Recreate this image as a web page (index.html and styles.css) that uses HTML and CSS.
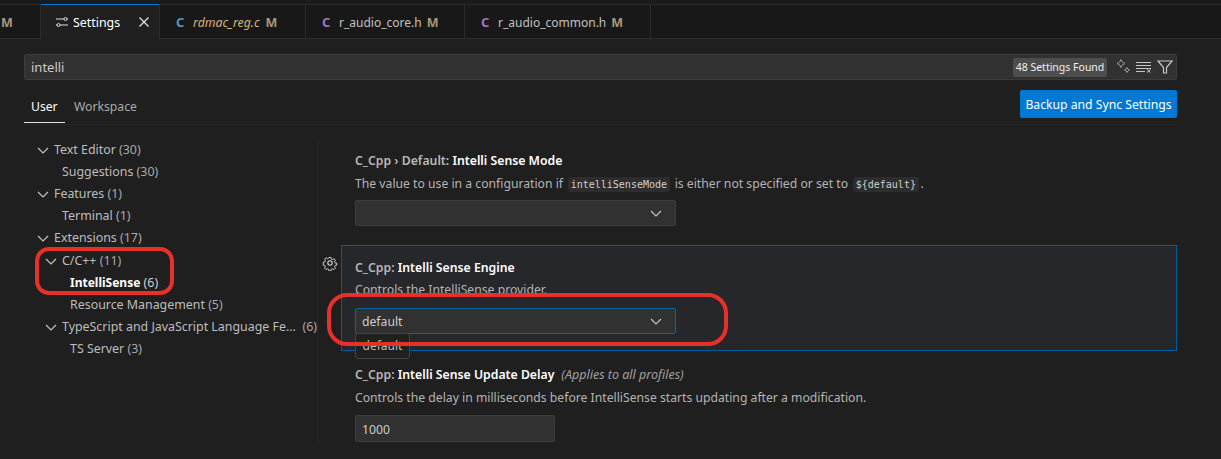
FILE: index.html
```html
<!DOCTYPE html>
<html lang="en">
<head>
<meta charset="utf-8">
<title>Settings</title>
<link rel="stylesheet" href="styles.css">
</head>
<body>
<div class="topstrip"></div>
<div class="tabs">
  <div class="tab tab-prev"><span class="mod">M</span></div>
  <div class="tab active">
    <svg class="tab-icon" width="16" height="16" viewBox="0 0 16 16" fill="none" stroke="#e0e0e0" stroke-width="1"><path d="M2 5h8M13 5h1M2 11h1M6 11h8"/><circle cx="11.5" cy="5" r="1.5"/><circle cx="4.5" cy="11" r="1.5"/></svg>
    <span class="tab-label">Settings</span>
    <svg class="tab-close" width="16" height="16" viewBox="0 0 16 16" fill="none" stroke="#e8e8e8" stroke-width="1.2"><path d="M3.5 3.5l9 9M12.5 3.5l-9 9"/></svg>
  </div>
  <div class="tab t-reg"><span class="lang c-blue">C</span><span class="name italic">rdmac_reg.c</span><span class="mod">M</span></div>
  <div class="tab t-core"><span class="lang c-purple">C</span><span class="name">r_audio_core.h</span><span class="mod">M</span></div>
  <div class="tab t-common"><span class="lang c-purple">C</span><span class="name">r_audio_common.h</span><span class="mod">M</span></div>
</div>

<div class="searchbar">
  <span class="search-text">intelli</span>
  <span class="badge">48 Settings Found</span>
  <svg class="s-icon" width="18" height="18" viewBox="0 0 18 18" fill="none" stroke="#9a9a9a" stroke-width="1"><path d="M7 1.500q.8 3.200 4 4-3.200.8-4 4-.8-3.200-4-4 3.200-.8 4-4z"/><path d="M13 9.500q.5 2 2.500 2.500-2 .5-2.500 2.500-.5-2-2.500-2.500 2-.5 2.500-2.500z"/></svg>
  <svg class="s-icon" width="18" height="18" viewBox="0 0 18 18" fill="none" stroke="#c8c8c8" stroke-width="1"><path d="M1 4.500h15M1 7.500h15M1 10.500h15M1 13.500h9"/><path d="M12 11.500l3.500 3M15.500 11.500l-3.500 3"/></svg>
  <svg class="s-icon" width="18" height="18" viewBox="0 0 18 18" fill="none" stroke="#c8c8c8" stroke-width="1.200"><path d="M2 3h14l-5.500 6.500v5.500h-3v-5.500z"/></svg>
</div>

<div class="scope">
  <div class="scope-tabs">
    <span class="scope-tab on">User</span>
    <span class="scope-tab">Workspace</span>
  </div>
  <span class="sync">Backup and Sync Settings</span>
</div>

<div class="main">
  <nav class="tree">
    <div class="row l1"><svg class="chev" width="14" height="14" viewBox="0 0 14 14"><path d="M2 5l5 5 5-5"/></svg>Text Editor&nbsp;<em>(30)</em></div>
    <div class="row l2">Suggestions&nbsp;<em>(30)</em></div>
    <div class="row l1"><svg class="chev" width="14" height="14" viewBox="0 0 14 14"><path d="M2 5l5 5 5-5"/></svg>Features&nbsp;<em>(1)</em></div>
    <div class="row l2">Terminal&nbsp;<em>(1)</em></div>
    <div class="row l1"><svg class="chev" width="14" height="14" viewBox="0 0 14 14"><path d="M2 5l5 5 5-5"/></svg>Extensions&nbsp;<em>(17)</em></div>
    <div class="row l2b"><svg class="chev" width="14" height="14" viewBox="0 0 14 14"><path d="M2 5l5 5 5-5"/></svg>C/C++&nbsp;<em>(11)</em></div>
    <div class="row l3 sel"><b>IntelliSense</b>&nbsp;<em>(6)</em></div>
    <div class="row l3">Resource Management&nbsp;<em>(5)</em></div>
    <div class="row l2b"><svg class="chev" width="14" height="14" viewBox="0 0 14 14"><path d="M2 5l5 5 5-5"/></svg><span class="trunc">TypeScript and JavaScript Language Fe...</span><em class="count-end">(6)</em></div>
    <div class="row l3">TS Server&nbsp;<em>(3)</em></div>
  </nav>

  <section class="list">
    <article class="item first">
      <h3 class="title">C_Cpp › Default: <b>Intelli Sense Mode</b></h3>
      <p class="desc">The value to use in a configuration if <code>intelliSenseMode</code> is either not specified or set to <code>${default}</code>.</p>
      <div class="select"><svg class="sel-chev" width="14" height="14" viewBox="0 0 14 14"><path d="M2 5l5 5 5-5"/></svg></div>
    </article>

    <article class="item focused">
      <svg class="gear" width="16" height="16" viewBox="0 0 16 16" fill="none" stroke="#d8d8d8" stroke-width="1.100"><circle cx="8" cy="8" r="2.200"/><path d="M6.800 1.500h2.400l.4 2 1.300.6 1.800-1.100 1.700 1.700-1.100 1.800.6 1.300 2 .4v2.400l-2 .4-.6 1.300 1.100 1.800-1.700 1.700-1.800-1.100-1.300.6-.4 2H6.800l-.4-2-1.300-.6-1.800 1.100-1.700-1.700 1.100-1.800-.6-1.300-2-.4V7l2-.4.6-1.300L1.600 3.500l1.700-1.700 1.800 1.100 1.300-.6z" transform="translate(1.200 1.200) scale(.85)"/></svg>
      <h3 class="title">C_Cpp: <b>Intelli Sense Engine</b></h3>
      <p class="desc">Controls the IntelliSense provider.</p>
      <div class="select on"><span>default</span><svg class="sel-chev" width="14" height="14" viewBox="0 0 14 14"><path d="M2 5l5 5 5-5"/></svg></div>
      <div class="tooltip">default</div>
    </article>

    <article class="item last">
      <h3 class="title">C_Cpp: <b>Intelli Sense Update Delay</b><i class="scope-note">(Applies to all profiles)</i></h3>
      <p class="desc">Controls the delay in milliseconds before IntelliSense starts updating after a modification.</p>
      <div class="number">1000</div>
    </article>
  </section>
</div>

<div class="ring ring-tree"></div>
<div class="ring ring-select"></div>
</body>
</html>
```
FILE: styles.css
```css
* { box-sizing: border-box; }
html, body { height: 100%; }
body {
  margin: 0;
  width: 1221px;
  height: 459px;
  overflow: hidden;
  position: relative;
  background: #1f1f1f;
  color: #cccccc;
  font-family: "Noto Sans", "Open Sans", sans-serif;
  font-size: 12.200px;
}
.topstrip { height: 5px; background: #1b1b1b; border-bottom: 1px solid #2b2b2b; }
.tabs {
  display: flex;
  height: 34px;
  background: #181818;
  border-bottom: 1px solid #2b2b2b;
}
.tab {
  display: flex;
  align-items: center;
  border-right: 1px solid #2b2b2b;
  height: 34px;
  color: #c8b48e;
  font-size: 12px;
}
.tab-prev { width: 41px; padding-left: 1px; font-weight: 600; }
.active {
  width: 119px;
  margin-top: -1px;
  height: 35px;
  padding-left: 13px;
  background: #1f1f1f;
  border-top: 1px solid #0078d4;
  color: #ffffff;
}
.tab-label { margin-left: 3px; font-size: 12.400px; }
.tab-close { margin-left: auto; margin-right: 7px; }
.tab-icon { flex: none; }
.t-reg { width: 146px; padding-left: 16px; }
.t-core { width: 159px; padding-left: 16px; }
.t-common { width: 186px; padding-left: 16px; }
.lang { width: 17px; font-weight: 700; font-size: 13px; }
.c-blue { color: #519aba; }
.c-purple { color: #a074c4; }
.name { margin-right: 5px; color: #c0c0c0; }
.name.italic { font-style: italic; color: #d8b27a; font-size: 12.300px; margin-right: 6px; }
.mod { color: #a8987a; font-weight: 700; font-size: 12.500px; }

.searchbar {
  display: flex;
  align-items: center;
  margin: 15px 44px 0 24px;
  height: 26px;
  padding: 0 2px 0 6px;
  background: #313131;
  border: 1px solid #3c3c3c;
  border-radius: 2px;
}
.search-text { flex: 1; color: #cccccc; font-size: 13px; }
.badge {
  width: 94px;
  height: 19px;
  line-height: 19px;
  text-align: center;
  font-size: 10.500px;
  background: #4d4d4d;
  color: #f0f0f0;
  border-radius: 2px;
  margin-right: 4px;
}
.s-icon { margin-left: 3px; flex: none; }

.scope {
  display: flex;
  align-items: flex-start;
  justify-content: space-between;
  margin: 10px 44px 0 24px;
  height: 35px;
  border-bottom: 1px solid #262626;
}
.scope-tabs { display: flex; gap: 8px; padding-top: 6px; }
.scope-tab { color: #a9a9a9; height: 27px; padding: 0 1px; line-height: 21px; }
.scope-tab.on {
  width: 41px;
  padding-left: 7px;
  color: #ffffff;
  border-bottom: 1px solid #e0e0e0;
}
.sync {
  width: 157px;
  height: 28px;
  line-height: 29px;
  text-align: center;
  background: #0078d4;
  color: #ffffff;
  border-radius: 2px;
  font-size: 12.200px;
}

.main { display: flex; }
.tree {
  width: 293px;
  margin: 14px 0 0 24px;
  flex: none;
}
.row {
  height: 22.110px;
  line-height: 22px;
  display: flex;
  align-items: center;
  white-space: nowrap;
  color: #bdbdbd;
  font-size: 12.400px;
}
.row em { font-style: normal; color: #a8a8a8; }
.chev, .sel-chev { fill: none; stroke: #c4c4c4; stroke-width: 1.200; flex: none; }
.chev { margin-right: 4px; }
.l1 { padding-left: 12px; }
.l2 { padding-left: 38px; }
.l2b { padding-left: 20px; }
.l3 { padding-left: 46px; }
.sel b { color: #ffffff; font-weight: 700; font-size: 12px; }
.sel em { color: #d0d0d0; }
.trunc { width: 243px; overflow: hidden; }
.count-end { margin-left: auto; }

.list {
  flex: 1;
  border-left: 1px solid #262626;
  margin-top: 15px;
  height: 304px;
  padding: 0 44px 0 23px;
}
.item { position: relative; padding-left: 14px; }
.first { height: 105px; padding-top: 10px; }
.focused {
  height: 106px;
  padding-top: 11px;
  background: #25272a;
  border: 1px solid #005a9e;
  padding-left: 13px;
}
.last { padding-top: 13px; }
.title { margin: 0; height: 21px; line-height: 21px; font-size: 12.250px; font-weight: 600; color: #b8b8b8; }
.title b { color: #ffffff; font-weight: 600; }
.scope-note { margin-left: 7px; font-weight: 400; color: #a0a0a0; font-size: 12.500px; }
.desc { margin: 2px 0 0; height: 21px; line-height: 21px; color: #b4b4b4; font-size: 12.200px; }
.focused .desc { margin-top: 1px; }
code {
  font-family: "DejaVu Sans Mono", "Liberation Mono", monospace;
  font-size: 10px;
  margin: 0 1.500px;
  padding: 2px 3px;
  background: #2d2d2d;
  border-radius: 3px;
  color: #cfcfcf;
}
.select {
  display: flex;
  align-items: center;
  justify-content: space-between;
  width: 321px;
  height: 26px;
  margin-top: 8px;
  padding: 0 12px 0 6px;
  background: #313131;
  border: 1px solid #3c3c3c;
  border-radius: 2px;
  font-size: 12.200px;
}
.first .select { justify-content: flex-end; margin-top: 6px; }
.select.on { border-color: #0a64a8; }
.number {
  width: 200px;
  height: 27px;
  line-height: 27px;
  margin-top: 7px;
  padding-left: 6px;
  background: #313131;
  border: 1px solid #3c3c3c;
  border-radius: 2px;
  font-size: 12.200px;
}
.gear { position: absolute; left: -20px; top: 9px; }
.tooltip {
  position: absolute;
  left: 13px;
  top: 87px;
  width: 55px;
  height: 26px;
  line-height: 24px;
  text-align: center;
  background: #202020;
  border: 1px solid #454545;
  border-radius: 3px;
  font-size: 12px;
  color: #bbbbbb;
  z-index: 2;
}
.ring {
  position: absolute;
  border: 4px solid #e8302a;
  z-index: 3;
}
.ring-tree { left: 35px; top: 247px; width: 139px; height: 48px; border-radius: 14px; }
.ring-select { left: 327px; top: 293px; width: 401px; height: 53px; border-radius: 20px; }
```
